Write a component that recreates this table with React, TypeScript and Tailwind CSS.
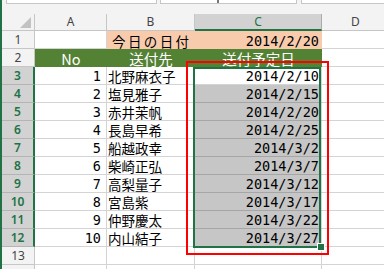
const rows = [
  { no: 1, name: "北野麻衣子", date: "2014/2/10" },
  { no: 2, name: "塩見雅子", date: "2014/2/15" },
  { no: 3, name: "赤井茉帆", date: "2014/2/20" },
  { no: 4, name: "長島早希", date: "2014/2/25" },
  { no: 5, name: "船越政幸", date: "2014/3/2" },
  { no: 6, name: "柴崎正弘", date: "2014/3/7" },
  { no: 7, name: "高梨量子", date: "2014/3/12" },
  { no: 8, name: "宮島紫", date: "2014/3/17" },
  { no: 9, name: "仲野慶太", date: "2014/3/22" },
  { no: 10, name: "内山結子", date: "2014/3/27" },
];

const grid = "grid shrink-0 grid-cols-[33px_72px_88px_127px_68px]";
const cell = "h-[18px] border-r border-b border-[#d4d4d4] flex items-end overflow-hidden";
const mono = "font-['DejaVu_Sans_Mono',monospace] text-[13.5px] leading-none text-black";
const jp = "font-['Noto_Sans_CJK_JP',sans-serif] text-[13.5px] leading-none text-black";
const head = "font-['Noto_Sans',sans-serif]";

function RowHead({ n, selected }: { n?: number; selected?: boolean }) {
  return selected ? (
    <div
      className={`${head} h-[18px] flex items-center justify-center pt-[1px] bg-[#d2d2d2] border-r-2 border-r-[#217346] border-b border-b-[#b4b4b4] text-[12px] font-semibold text-[#217346]`}
    >
      {n}
    </div>
  ) : (
    <div
      className={`${head} h-[18px] flex items-center justify-center pt-[1px] bg-[#f3f3f3] border-r border-b border-[#c6c6c6] text-[12px] text-[#444]`}
    >
      {n}
    </div>
  );
}

function ColHead({ label, selected }: { label: string; selected?: boolean }) {
  return (
    <div
      className={
        selected
          ? `${head} h-[17px] flex items-center justify-center bg-[#d2d2d2] border-r border-r-[#ababab] border-b-2 border-b-[#217346] text-[12px] text-[#217346]`
          : `${head} h-[17px] flex items-center justify-center bg-[#f3f3f3] border-r border-b border-[#c6c6c6] text-[12px] text-[#444]`
      }
    >
      {label}
    </div>
  );
}

export default function App() {
  return (
    <div className="relative w-[384px] h-[269px] overflow-hidden bg-white flex items-start">
      <div className="w-[2px] h-[269px] shrink-0 bg-[#217346]" />
      <div className="flex flex-col w-[388px] shrink-0">
        {/* formula bar, only its lower edge shows */}
        <div className="h-[14px] shrink-0 bg-[#f3f3f3] flex items-start">
          <div className="ml-[4px] w-[151px] h-[4px] bg-white border-x border-b border-[#c6c6c6]" />
          <div className="ml-[3px] w-[137px] h-[4px] bg-white border-x border-b border-[#c6c6c6] relative">
            <div className="absolute left-[56px] top-0 w-[2px] h-[3px] bg-[#777]" />
          </div>
          <div className="ml-[4px] flex-1 h-[4px] bg-white border-l border-b border-[#c6c6c6]" />
        </div>

        {/* column headers */}
        <div className={grid}>
          <div className="h-[17px] bg-[#f3f3f3] border-r border-b border-[#c6c6c6] flex items-end justify-end pr-[3px] pb-[2px]">
            <svg width="11" height="11" viewBox="0 0 11 11">
              <polygon points="11,0 11,11 0,11" fill="#c2c2c2" />
            </svg>
          </div>
          <ColHead label="A" />
          <ColHead label="B" />
          <ColHead label="C" selected />
          <ColHead label="D" />
        </div>

        {/* row 1 */}
        <div className={grid}>
          <RowHead n={1} />
          <div className={cell} />
          <div className="h-[18px] bg-[#f8cbad] flex items-end pl-[5px] pb-[1px] overflow-hidden">
            <span className={`${jp} tracking-[2.4px] whitespace-nowrap`}>今日の日付</span>
          </div>
          <div className="h-[18px] bg-[#f8cbad] border-r border-[#f8cbad] flex items-end justify-end pr-[2px] pb-[1px]">
            <span className={mono}>2014/2/20</span>
          </div>
          <div className={cell} />
        </div>

        {/* row 2 */}
        <div className={grid}>
          <RowHead n={2} />
          <div className="h-[18px] bg-[#548235] flex items-end justify-center pb-[1px]">
            <span className={`${jp} text-[14.5px] text-white`}>No</span>
          </div>
          <div className="h-[18px] bg-[#548235] flex items-end justify-center pb-[1px]">
            <span className={`${jp} text-[14.5px] text-white`}>送付先</span>
          </div>
          <div className="h-[18px] bg-[#548235] flex items-end justify-center pb-[1px]">
            <span className={`${jp} text-[14.5px] text-white`}>送付予定日</span>
          </div>
          <div className={cell} />
        </div>

        {/* rows 3–12 */}
        {rows.map((r, i) => (
          <div key={r.no} className={grid}>
            <RowHead n={i + 3} selected />
            <div className={`${cell} justify-end pr-[5px] pb-[1px]`}>
              <span className={mono}>{r.no}</span>
            </div>
            <div className={`${cell} pl-[1px] pb-[1px]`}>
              <span className={jp}>{r.name}</span>
            </div>
            <div
              className={
                i === 0
                  ? `${cell} justify-end pr-[2px] pb-[1px]`
                  : "h-[18px] bg-[#c6c6c6] border-r border-b border-r-[#d4d4d4] border-b-[#a6a6a6] flex items-end justify-end pr-[2px] pb-[1px]"
              }
            >
              <span className={mono}>{r.date}</span>
            </div>
            <div className={cell} />
          </div>
        ))}

        {/* row 13 and the top of 14 */}
        <div className={grid}>
          <RowHead n={13} />
          <div className={cell} />
          <div className={cell} />
          <div className={cell} />
          <div className={cell} />
        </div>
        <div className={grid}>
          <RowHead />
          <div className={cell} />
          <div className={cell} />
          <div className={cell} />
          <div className={cell} />
        </div>
      </div>

      {/* selection C3:C12 */}
      <div className="absolute left-[193px] top-[67px] w-[128px] h-[181px] border-2 border-[#217346]" />
      <div className="absolute left-[317px] top-[243px] w-[8px] h-[8px] bg-[#217346] border border-white" />
      {/* red frame */}
      <div className="absolute left-[186px] top-[61px] w-[143px] h-[194px] border-2 border-[#ff0000]" />
    </div>
  );
}
